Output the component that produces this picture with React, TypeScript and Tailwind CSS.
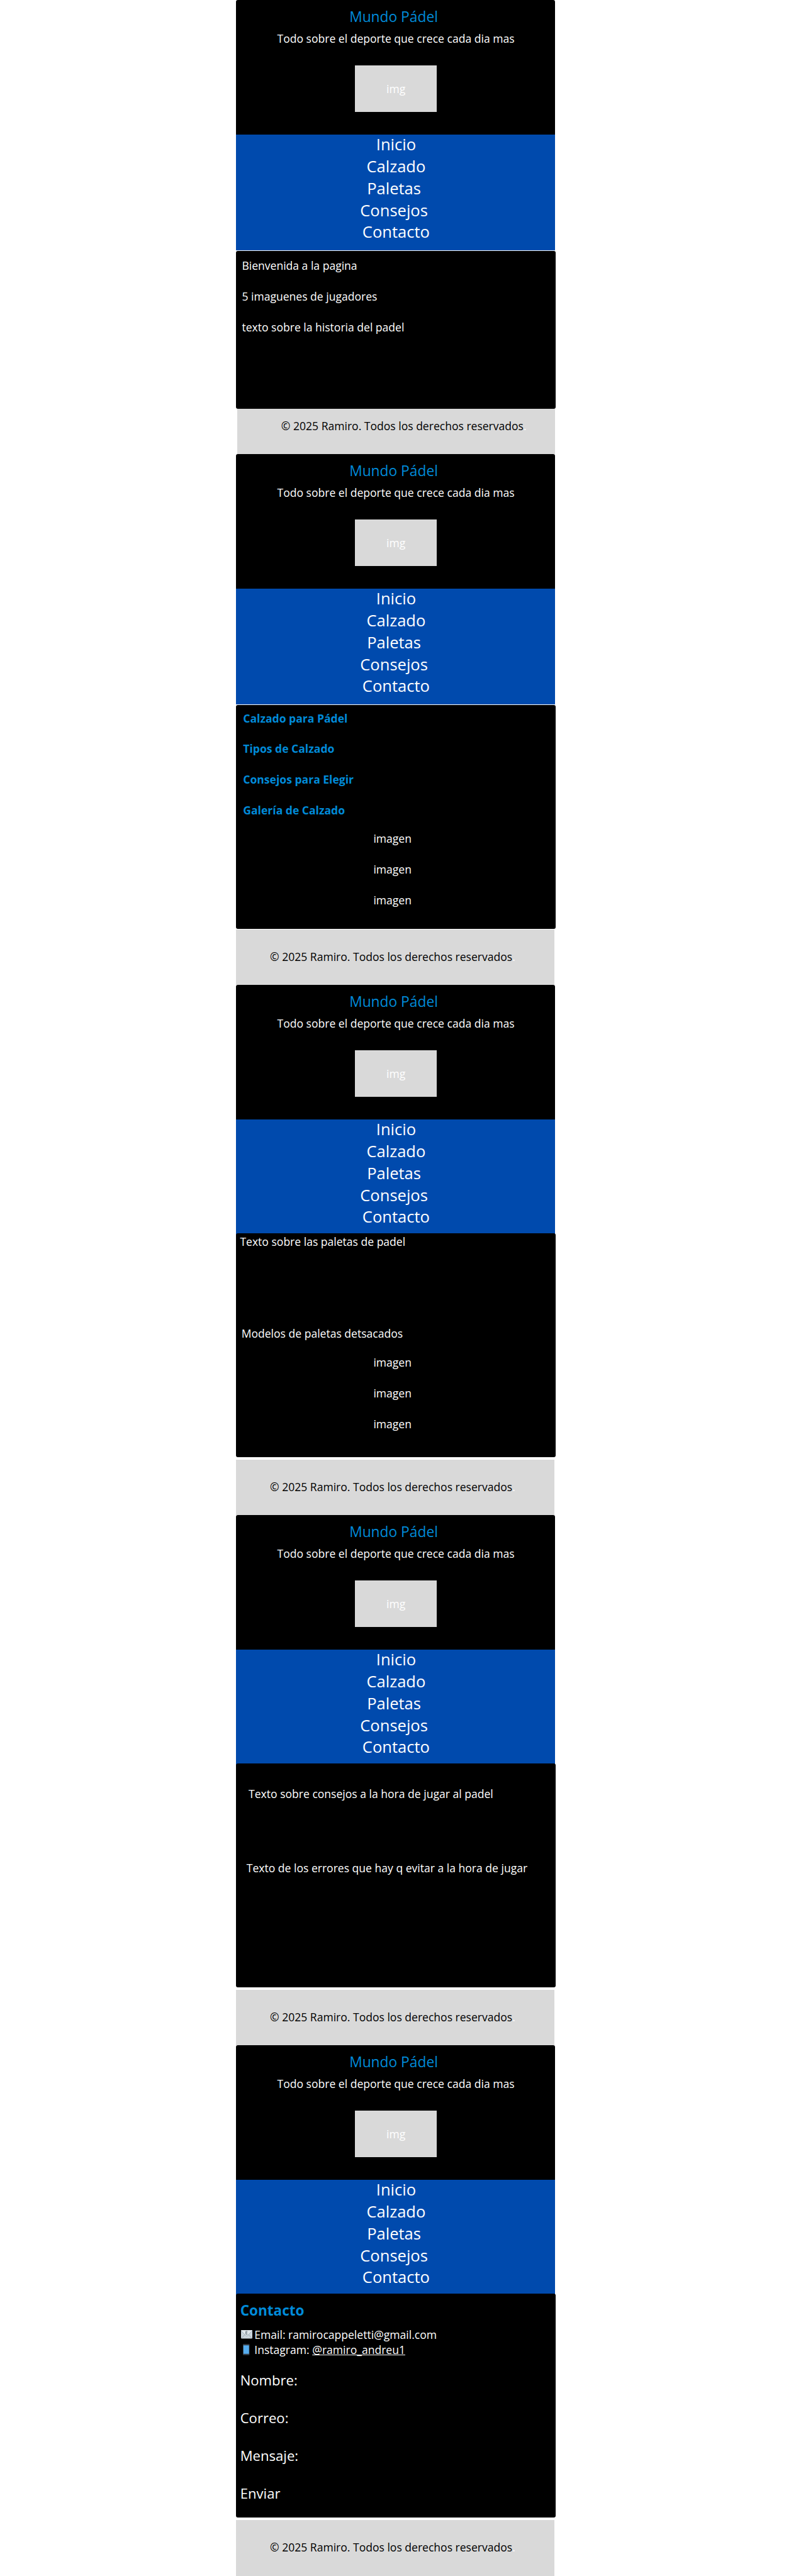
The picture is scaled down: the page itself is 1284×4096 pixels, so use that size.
import type { ReactNode } from "react";

function Header() {
  return (
    <header className="flex h-[214px] flex-col rounded-t-[3px] bg-black pt-[11.9px] text-white">
      <h1 className="pl-[180.2px] text-[22.78px] leading-[30px] text-[#008bd9]">Mundo Pádel</h1>
      <p className="mt-[7px] pl-[65.5px] leading-[24px]">Todo sobre el deporte que crece cada dia mas</p>
      <div className="mt-[31.1px] ml-[189.4px] flex h-[74.5px] w-[129.5px] items-center justify-center bg-[#d9d9d9] pb-[0.5px]">
        img
      </div>
    </header>
  );
}

function Nav() {
  return (
    <nav className="flex h-[184px] justify-center bg-[#004aad] pl-[1.8px] text-[25.54px] leading-[34.8px] text-white">
      <ul className="-mt-[1.9px] text-center whitespace-pre">
        <li>Inicio</li>
        <li>Calzado</li>
        <li>{"Paletas "}</li>
        <li>{"Consejos "}</li>
        <li>Contacto</li>
      </ul>
    </nav>
  );
}

function Footer({ className }: { className: string }) {
  return (
    <footer className={`grow bg-[#d9d9d9] leading-[24px] text-black ${className}`}>
      <p>
        © 2025 Ramiro. Todos los derechos reservados<span className="text-white">.</span>
      </p>
    </footer>
  );
}

function Page({ className, main, footer, children }: { className: string; main: string; footer: string; children: ReactNode }) {
  return (
    <section className={`flex flex-col ${className}`}>
      <Header />
      <Nav />
      <main className={`mr-[-0.5px] rounded-[3px] bg-black leading-[24px] text-white ${main}`}>{children}</main>
      <Footer className={footer} />
    </section>
  );
}

function Imagenes() {
  return (
    <ul className="flex flex-col gap-[24.9px] pl-[218.4px]">
      <li>imagen</li>
      <li>imagen</li>
      <li>imagen</li>
    </ul>
  );
}

function MailIcon() {
  return (
    <svg viewBox="0 0 36 27" className="h-[13.5px] w-[18px]">
      <rect width="36" height="27" rx="2.5" fill="#ccd6dd" />
      <path d="M1 26 13 14M35 26 23 14" stroke="#99aab5" strokeWidth="2" />
      <path d="M0 2.5C0 1 1 0 2.5 0h31C35 0 36 1 36 2.5L21.5 17a5 5 0 0 1-7 0Z" fill="#e1e8ed" />
      <path d="M.5 2.5 14.5 17a5 5 0 0 0 7 0L35.5 2.5" fill="none" stroke="#99aab5" strokeWidth="1.8" />
      <path d="M20.500 4h-5v9h5M15.500 8.500h4.500" fill="none" stroke="#66757f" strokeWidth="2" />
    </svg>
  );
}

function PhoneIcon() {
  return (
    <svg viewBox="0 0 20 36" className="ml-[3.7px] h-[18px] w-[10.5px]" preserveAspectRatio="none">
      <rect width="20" height="36" rx="2.5" fill="#31373d" />
      <rect x="1.500" y="4.500" width="17" height="27" fill="#55acee" />
    </svg>
  );
}

export default function App() {
  return (
    <div className="h-[4096px] w-full overflow-hidden bg-white font-['Open_Sans',sans-serif] text-[17.56px]">
      <div className="ml-[375px] w-[507px]">
        <Page className="h-[722px]" main="mt-px h-[251px] pt-[10.8px] pl-[9.4px]" footer="ml-[2px] pt-[14.8px] pl-[69.8px]">
          <div className="flex flex-col gap-[24.9px]">
            <p>Bienvenida a la pagina</p>
            <p>5 imaguenes de jugadores</p>
            <p>texto sobre la historia del padel</p>
          </div>
        </Page>

        <Page className="h-[844px]" main="mt-px h-[356px] pt-[8.5px]" footer="mr-px mt-[0.5px] pt-[31px] pl-[54px]">
          <div className="flex flex-col gap-[24.9px] pl-[11.3px] font-bold text-[#008bd9]">
            <h2>Calzado para Pádel</h2>
            <h2>Tipos de Calzado</h2>
            <h2>Consejos para Elegir</h2>
            <h2>Galería de Calzado</h2>
          </div>
          <div className="mt-[21.1px]">
            <Imagenes />
          </div>
        </Page>

        <Page className="h-[843px]" main="-mt-[3px] h-[356px] pt-[0.6px]" footer="mt-[4px] mr-px pt-[31px] pl-[54px]">
          <p className="pl-[6.4px]">Texto sobre las paletas de padel</p>
          <p className="mt-[122.4px] mb-[22.4px] pl-[8.7px]">Modelos de paletas detsacados</p>
          <Imagenes />
        </Page>

        <Page className="h-[843px]" main="-mt-[3px] h-[356px] pt-[35.5px]" footer="mt-[4px] mr-px pt-[31.2px] pl-[54px]">
          <p className="pl-[20.1px]">Texto sobre consejos a la hora de jugar al padel</p>
          <p className="mt-[94.5px] pl-[16.8px]">Texto de los errores que hay q evitar a la hora de jugar</p>
        </Page>

        <Page className="h-[844px]" main="-mt-[3px] h-[356px] pt-[12px] pl-[6.7px]" footer="mt-[4px] mr-px pt-[31.2px] pl-[54px]">
          <h2 className="text-[22.55px] leading-[30px] font-bold text-[#008bd9]">Contacto</h2>
          <ul className="mt-[10.5px] leading-[24.5px]">
            <li className="flex items-center">
              <span className="w-[22.6px] pl-px">
                <MailIcon />
              </span>
              Email: ramirocappeletti@gmail.com
            </li>
            <li className="flex items-center whitespace-pre">
              <span className="w-[22.6px] pl-px">
                <PhoneIcon />
              </span>
              {"Instagram: "}
              <a className="underline [text-decoration-skip-ink:none]">@ramiro_andreu1</a>
            </li>
          </ul>
          <div className="mt-[20px] flex flex-col gap-[30.3px] text-[22.1px] leading-[30px]">
            <p>Nombre:</p>
            <p>Correo:</p>
            <p>Mensaje:</p>
            <p>Enviar</p>
          </div>
        </Page>
      </div>
    </div>
  );
}
